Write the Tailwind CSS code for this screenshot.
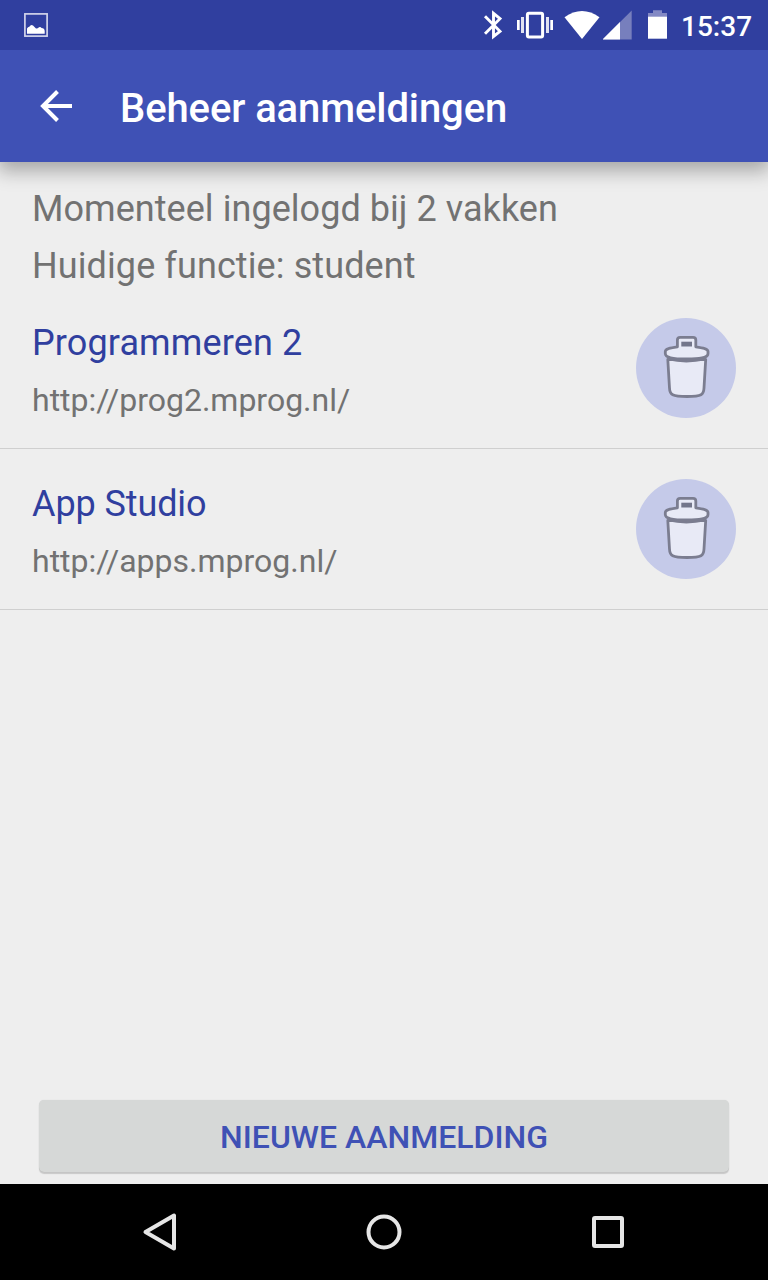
<!DOCTYPE html>
<html lang="nl">
<head>
<meta charset="utf-8">
<title>Beheer aanmeldingen</title>
<script src="https://cdn.jsdelivr.net/npm/@tailwindcss/browser@4"></script>
</head>
<body class="w-[768px] h-[1280px] overflow-hidden flex flex-col bg-[#eeeeee] font-['Roboto',sans-serif]">
<svg class="hidden">
  <symbol id="trash" viewBox="0 0 100 100">
    <g fill="#e8eaf6" stroke="#7b7d90" stroke-width="2.800" stroke-linejoin="round">
      <path d="M31.800 41.500 L33.500 70 C33.700 76.500 36 78.500 51 78.500 C66 78.500 67.700 76.500 68 70 L69.700 41.500 Z"/>
      <path d="M32.500 40.800 Q50 45 69 40.800" stroke-width="3.200"/>
      <path d="M41.400 28.800 V22 Q41.400 19.300 44.200 19.300 H57 Q59.800 19.300 59.800 22 V28.800 C67 29.800 72 30.700 72 33.500 V35.500 C72 39.500 66 41 51 41 C36 41 29.300 39.500 29.300 35.500 V33.500 C29.300 30.700 34 29.800 41.400 28.800 Z"/>
    </g>
    <rect x="45.300" y="23.700" width="10.700" height="4.800" fill="#73768b"/>
  </symbol>
</svg>
<header class="relative shrink-0 text-white shadow-[0_7px_18px_2px_rgba(0,0,0,0.3)]">
  <div class="h-[50px] bg-[#303f9f] flex items-center pl-6 pr-4">
    <svg class="w-6 h-6" viewBox="0 0 24 24"><rect x=".9" y=".9" width="22.200" height="22.200" fill="none" stroke="#d1d4ea" stroke-width="1.700"/><path d="M3 20.700V15.500Q4 14 5.300 13.800Q7 11 9 12.500L12 15.500Q13.500 15.800 15 14.300Q16.500 13.500 17.500 15Q20.500 15 20.700 18V20.700Z" fill="#fff"/></svg>
    <svg class="w-5 h-[50px] ml-auto" viewBox="483 0 20 50" fill="none" stroke="#fff" stroke-width="2.900"><path d="M485 16.300 L500 31.300 L493.500 36.500 V13.300 L500 18.700 L485 33.700"/></svg>
    <svg class="w-9 h-[50px] ml-3.5" viewBox="517 0 36 50"><rect x="527.400" y="13.200" width="15.200" height="23.700" rx="1.500" fill="none" stroke="#fff" stroke-width="3"/><path d="M517 20h2.700v10H517zM550.300 20h2.700v10h-2.700z" fill="#fff"/><path d="M521 17h3v16h-3zM546 17h3v16h-3z" fill="#e0e2f1"/></svg>
    <svg class="w-9 h-[50px] ml-[11px]" viewBox="564 0 36 50"><path d="M564.500 17.300Q582 4.700 599.500 17.300L582 39Z" fill="#fff"/></svg>
    <svg class="w-[29px] h-[50px] ml-[3px]" viewBox="603 0 29 50"><path d="M602.500 39.500L631.700 10.500V39.500Z" fill="#777fbd"/><path d="M602.500 39.500L620 22V39.500Z" fill="#fff"/></svg>
    <svg class="w-[19px] h-[50px] ml-4" viewBox="648 0 19 50"><path d="M648 17V13H653V10.300H662V13H667V17Z" fill="#8389c4"/><path d="M648 16.700H667V38.700H648Z" fill="#fff"/></svg>
    <span class="ml-3.5 w-[71px] pt-[3px] text-[28px] leading-8 font-medium whitespace-nowrap">15:37</span>
  </div>
  <div class="h-28 bg-[#3f51b5] flex items-center">
    <svg class="w-8 h-8 ml-10" viewBox="0 0 32 32" fill="none" stroke="#fff" stroke-width="4"><path d="M32 16H4M17.500 1.500L3 16L17.500 30.500"/></svg>
    <h1 class="ml-12 pt-1.5 text-[40px] leading-[48px] tracking-[-0.1px] font-medium whitespace-nowrap">Beheer aanmeldingen</h1>
  </div>
</header>
<main class="flex-1 flex flex-col">
  <div class="h-[126px] pt-[26px] px-8 flex flex-col gap-[15px] text-4xl text-[#727272]">
    <p class="leading-[42px] tracking-[0.05px]">Momenteel ingelogd bij 2 vakken</p>
    <p class="leading-[42px] tracking-[0.1px]">Huidige functie: student</p>
  </div>
  <ul>
    <li class="h-[161px] border-b border-[#cfcfcf] px-8 flex items-center justify-between">
      <div class="flex flex-col gap-[17px] pt-1">
        <h2 class="text-4xl leading-[42px] tracking-[0.12px] text-[#303f9f]">Programmeren 2</h2>
        <p class="text-[32px] leading-[38px] text-[#727272]">http://prog2.mprog.nl/</p>
      </div>
      <button aria-label="Verwijder Programmeren 2" class="size-[100px] rounded-full bg-[#c5cae9]"><svg class="size-full"><use href="#trash"/></svg></button>
    </li>
    <li class="h-[161px] border-b border-[#cfcfcf] px-8 flex items-center justify-between">
      <div class="flex flex-col gap-[17px] pt-1">
        <h2 class="text-4xl leading-[42px] tracking-[-0.1px] text-[#303f9f]">App Studio</h2>
        <p class="text-[32px] leading-[38px] text-[#727272]">http://apps.mprog.nl/</p>
      </div>
      <button aria-label="Verwijder App Studio" class="size-[100px] rounded-full bg-[#c5cae9]"><svg class="size-full"><use href="#trash"/></svg></button>
    </li>
  </ul>
  <button class="mt-auto mx-auto mb-3 w-[690px] h-[72px] pt-0.5 rounded-[5px] bg-[#d6d8d7] text-[#3f51b5] text-[32px] leading-[38px] font-medium shadow-[0_2px_1px_rgba(0,0,0,0.16),0_0_1px_rgba(0,0,0,0.12)]">NIEUWE AANMELDING</button>
</main>
<nav class="h-24 shrink-0 bg-black flex justify-center items-center gap-44">
  <svg class="size-12" viewBox="0 0 48 48" fill="none" stroke="#e6e6e6" stroke-width="4" stroke-linejoin="round"><path d="M38 7.500V40.500L9.500 24Z"/></svg>
  <svg class="size-12" viewBox="0 0 48 48" fill="none" stroke="#e6e6e6" stroke-width="4"><circle cx="24" cy="24" r="15.500"/></svg>
  <svg class="size-12" viewBox="0 0 48 48" fill="none" stroke="#e6e6e6" stroke-width="4"><rect x="10" y="10" width="28" height="28" rx="1"/></svg>
</nav>
</body>
</html>
